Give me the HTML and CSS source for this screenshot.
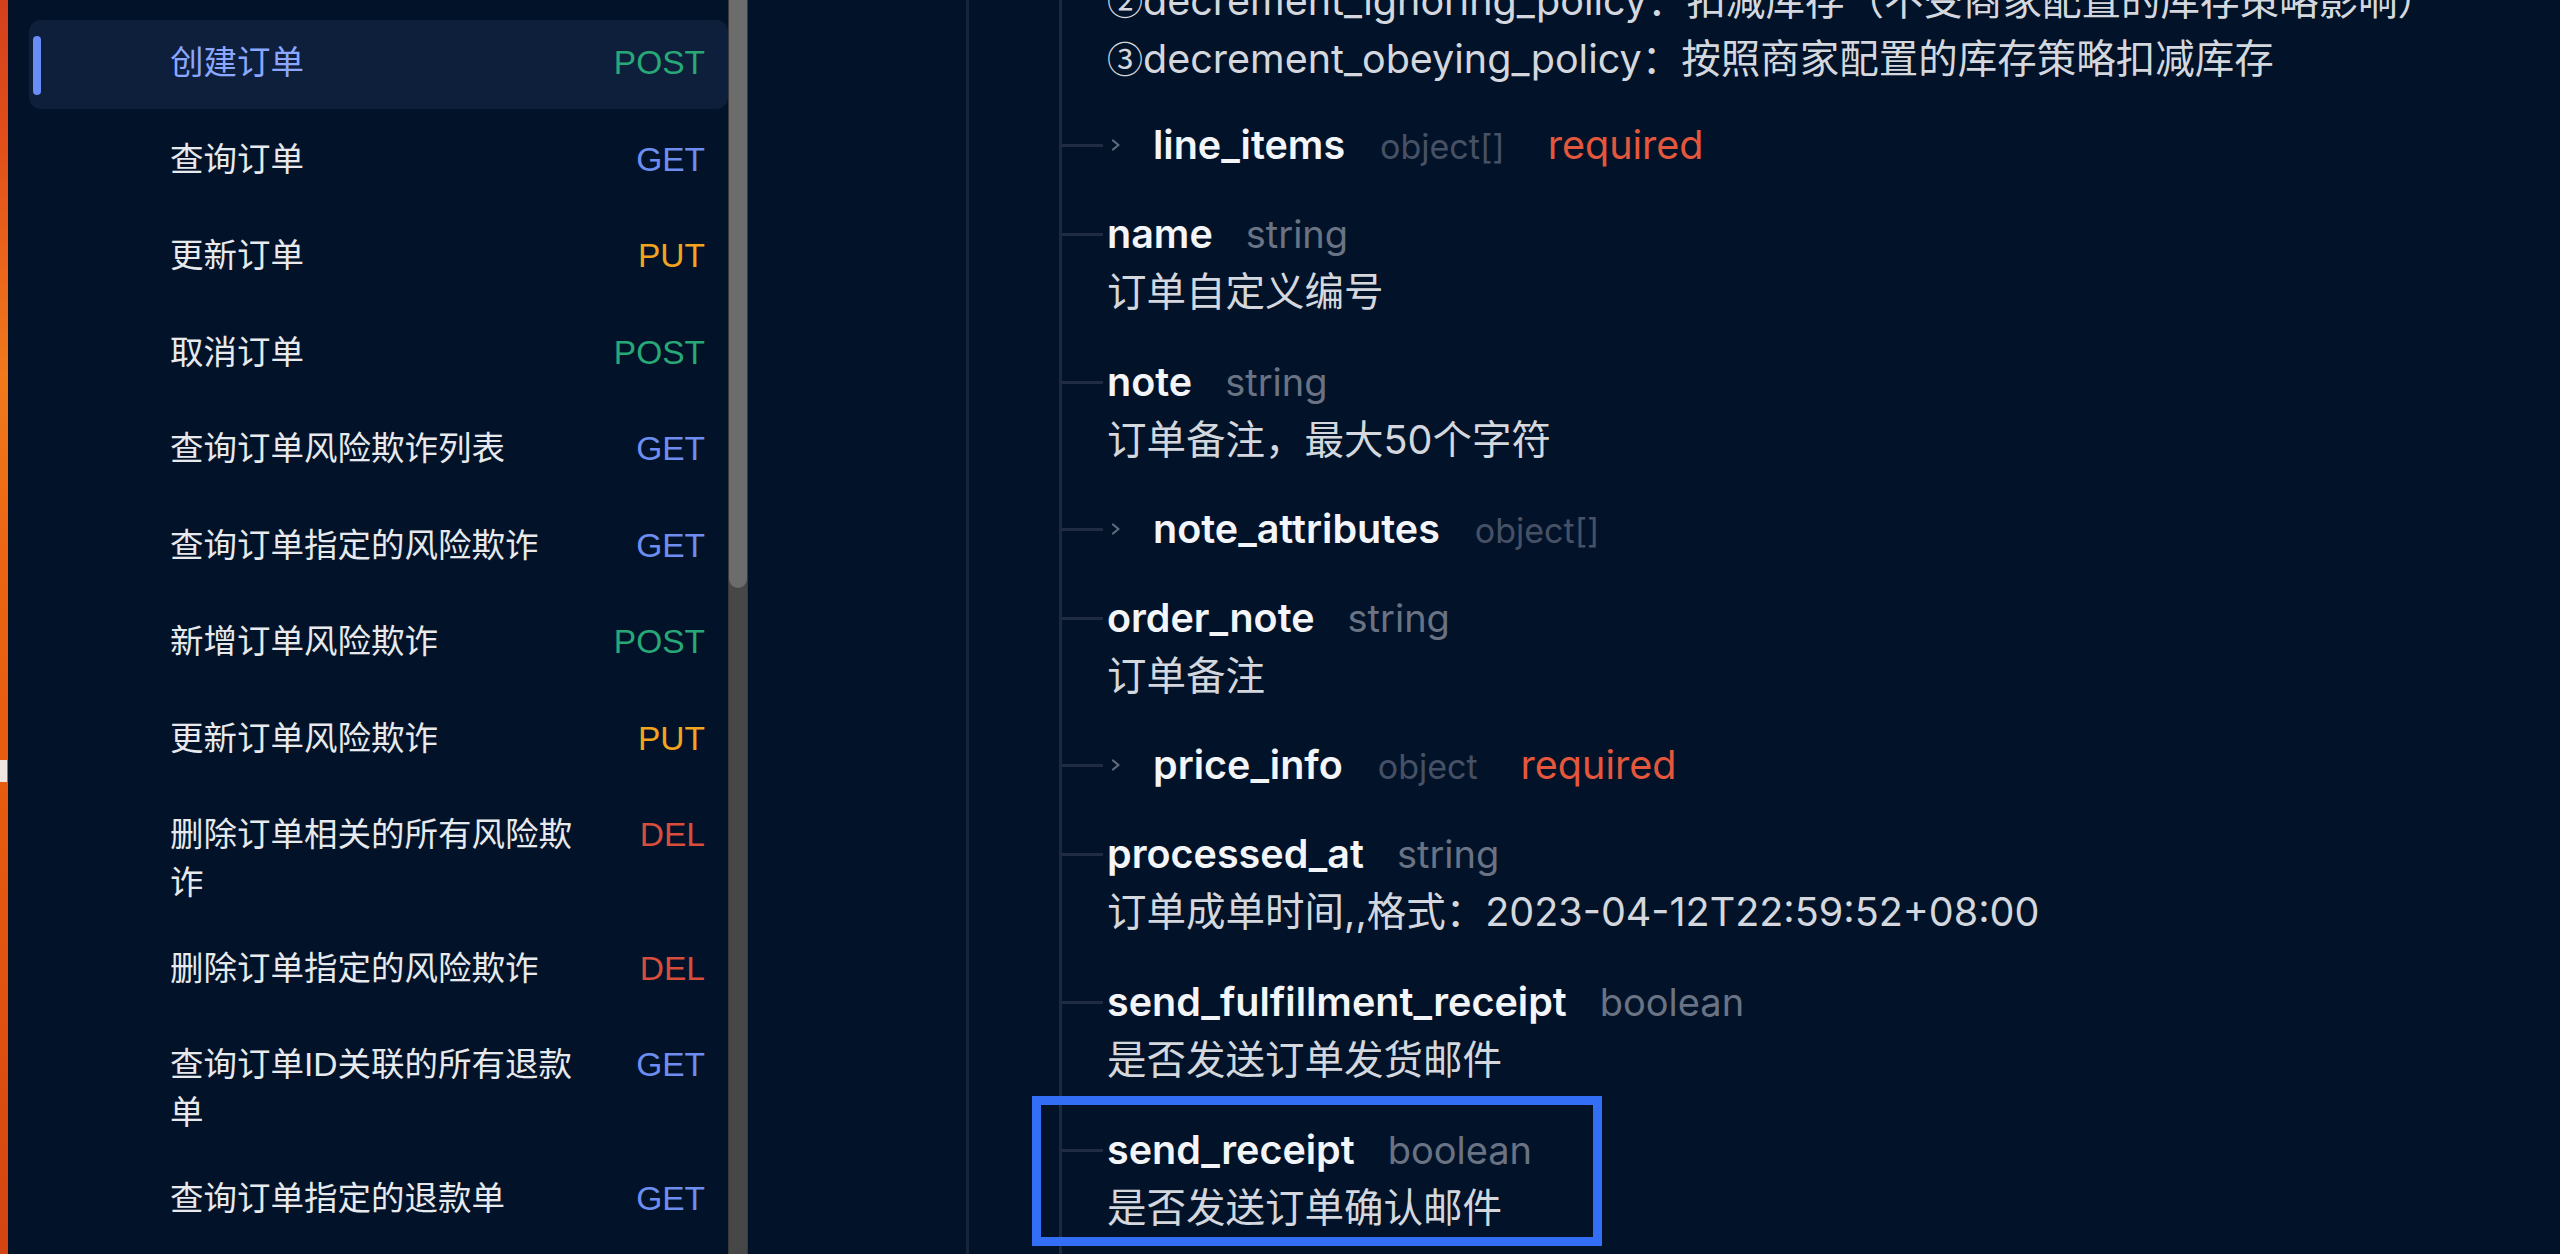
FILE: index.html
```html
<!DOCTYPE html>
<html lang="zh-CN">
<head>
<meta charset="utf-8">
<title>订单 API</title>
<link rel="stylesheet" href="styles.css">
</head>
<body>
<div class="app">
  <div class="edge"><span class="edge-mark"></span></div>
  <aside class="sidebar">
    <ul class="api-list">
      <li class="api-item active"><span class="api-name">创建订单</span><span class="api-method post">POST</span></li>
      <li class="api-item"><span class="api-name">查询订单</span><span class="api-method get">GET</span></li>
      <li class="api-item"><span class="api-name">更新订单</span><span class="api-method put">PUT</span></li>
      <li class="api-item"><span class="api-name">取消订单</span><span class="api-method post">POST</span></li>
      <li class="api-item"><span class="api-name">查询订单风险欺诈列表</span><span class="api-method get">GET</span></li>
      <li class="api-item"><span class="api-name">查询订单指定的风险欺诈</span><span class="api-method get">GET</span></li>
      <li class="api-item"><span class="api-name">新增订单风险欺诈</span><span class="api-method post">POST</span></li>
      <li class="api-item"><span class="api-name">更新订单风险欺诈</span><span class="api-method put">PUT</span></li>
      <li class="api-item"><span class="api-name">删除订单相关的所有风险欺诈</span><span class="api-method del">DEL</span></li>
      <li class="api-item"><span class="api-name">删除订单指定的风险欺诈</span><span class="api-method del">DEL</span></li>
      <li class="api-item"><span class="api-name">查询订单ID关联的所有退款单</span><span class="api-method get">GET</span></li>
      <li class="api-item"><span class="api-name">查询订单指定的退款单</span><span class="api-method get">GET</span></li>
    </ul>
  </aside>
  <div class="scrollbar"><div class="scroll-thumb"></div></div>
  <main class="content">
    <div class="tree">
      <div class="subtree">
        <div class="field tail">
          <p class="desc"><span class="circ">②</span>decrement_ignoring_policy：扣减库存（不受商家配置的库存策略影响）</p>
          <p class="desc"><span class="circ">③</span>decrement_obeying_policy：按照商家配置的库存策略扣减库存</p>
        </div>

        <div class="field collapsible">
          <div class="field-head">
            <span class="conn"></span>
            <span class="chev"><svg width="10" height="12" viewBox="0 0 10 12"><polyline points="2,1.5 7.5,6 2,10.5" fill="none" stroke="#5f6a7c" stroke-width="2.2" stroke-linecap="round" stroke-linejoin="round"/></svg></span>
            <span class="label"><span class="fname">line_items</span><span class="ftype obj">object[]</span><span class="req">required</span></span>
          </div>
        </div>

        <div class="field">
          <div class="field-head"><span class="conn"></span><span class="label"><span class="fname">name</span><span class="ftype">string</span></span></div>
          <p class="desc">订单自定义编号</p>
        </div>

        <div class="field">
          <div class="field-head"><span class="conn"></span><span class="label"><span class="fname">note</span><span class="ftype">string</span></span></div>
          <p class="desc">订单备注，最大50个字符</p>
        </div>

        <div class="field collapsible">
          <div class="field-head">
            <span class="conn"></span>
            <span class="chev"><svg width="10" height="12" viewBox="0 0 10 12"><polyline points="2,1.5 7.5,6 2,10.5" fill="none" stroke="#5f6a7c" stroke-width="2.2" stroke-linecap="round" stroke-linejoin="round"/></svg></span>
            <span class="label"><span class="fname">note_attributes</span><span class="ftype obj">object[]</span></span>
          </div>
        </div>

        <div class="field">
          <div class="field-head"><span class="conn"></span><span class="label"><span class="fname">order_note</span><span class="ftype">string</span></span></div>
          <p class="desc">订单备注</p>
        </div>

        <div class="field collapsible">
          <div class="field-head">
            <span class="conn"></span>
            <span class="chev"><svg width="10" height="12" viewBox="0 0 10 12"><polyline points="2,1.5 7.5,6 2,10.5" fill="none" stroke="#5f6a7c" stroke-width="2.2" stroke-linecap="round" stroke-linejoin="round"/></svg></span>
            <span class="label"><span class="fname">price_info</span><span class="ftype obj">object</span><span class="req">required</span></span>
          </div>
        </div>

        <div class="field">
          <div class="field-head"><span class="conn"></span><span class="label"><span class="fname">processed_at</span><span class="ftype">string</span></span></div>
          <p class="desc">订单成单时间,,格式：2023-04-12T22:59:52+08:00</p>
        </div>

        <div class="field">
          <div class="field-head"><span class="conn"></span><span class="label"><span class="fname">send_fulfillment_receipt</span><span class="ftype">boolean</span></span></div>
          <p class="desc">是否发送订单发货邮件</p>
        </div>

        <div class="field highlight">
          <div class="field-head"><span class="conn"></span><span class="label"><span class="fname">send_receipt</span><span class="ftype">boolean</span></span></div>
          <p class="desc">是否发送订单确认邮件</p>
          <div class="highlight-box"></div>
        </div>
      </div>
    </div>
  </main>
</div>
</body>
</html>
```

FILE: styles.css
```css
html, body {
  margin: 0;
  padding: 0;
  height: 100%;
  background: #021329;
}

body {
  overflow: hidden;
}

.app {
  display: flex;
  height: 1254px;
  overflow: hidden;
  background: #021329;
}

/* orange window edge on the far left */
.edge {
  flex: 0 0 8px;
  box-sizing: border-box;
  padding-top: 760px;
  background: linear-gradient(to bottom, #d4401c 0%, #e2501a 12%, #f07a1c 30%, #ea6412 45%, #e65a10 65%, #de4e10 85%, #d24412 100%);
}

.edge-mark {
  display: block;
  width: 7px;
  height: 22px;
  background: #efe6e2;
}

/* sidebar */
.sidebar {
  flex: 0 0 720px;
  box-sizing: border-box;
  padding-top: 20px;
  font-family: "Liberation Sans", "Noto Sans CJK SC", sans-serif;
  font-size: 33.5px;
}

.api-list {
  list-style: none;
  margin: 0;
  padding: 0 0 0 21px;
  display: flex;
  flex-direction: column;
  gap: 7.5px;
}

.api-item {
  position: relative;
  display: flex;
  align-items: flex-start;
  box-sizing: border-box;
  min-height: 89px;
  padding: 19px 23px 11px 141px;
  line-height: 48px;
  border-radius: 12px;
  color: #e7e9ed;
}

.api-item.active {
  background: #0e1f3c;
  color: #8ba7ff;
}

.api-item.active::before {
  content: "";
  position: absolute;
  left: 4px;
  top: 16px;
  width: 8px;
  height: 59px;
  border-radius: 4px;
  background: #6a8cf6;
}

.api-name {
  width: 420px;
}

.api-method {
  margin-left: auto;
}

.api-method.post { color: #28a877; }
.api-method.get  { color: #6d8ef0; }
.api-method.put  { color: #f3a41f; }
.api-method.del  { color: #d94d3c; }

/* scrollbar */
.scrollbar {
  flex: 0 0 20px;
  box-sizing: border-box;
  background: #474747;
  border-left: 1px solid #3a3a3a;
  border-right: 1px solid #3a3a3a;
}

.scroll-thumb {
  height: 588px;
  background: #6c6c6c;
  border-radius: 0 0 10px 10px;
}

/* content */
.content {
  flex: 1;
  min-width: 0;
  padding-left: 218px;
  font-family: "Inter", "Noto Sans CJK SC", sans-serif;
  font-size: 39.5px;
  color: #d4d8de;
}

.tree {
  margin-top: -28px;
  padding-bottom: 200px;
  border-left: 3px solid #18243a;
}

.subtree {
  margin-left: 90px;
  padding-bottom: 200px;
  border-left: 3px solid #1c283d;
}

.field {
  padding: 16px 0;
}

.field.collapsible {
  padding: 15px 0;
}

.field.tail {
  padding: 0 0 13px;
}

.field.highlight {
  position: relative;
}

.field-head {
  display: flex;
  align-items: center;
  height: 58px;
}

.conn {
  flex: 0 0 41px;
  height: 3px;
  margin-right: 4px;
  background: #1f2b40;
}

.collapsible .conn {
  margin-right: 0;
}

.chev {
  flex: 0 0 50px;
  box-sizing: border-box;
  display: flex;
  align-items: center;
  padding-left: 8px;
}

.label {
  display: flex;
  align-items: baseline;
  white-space: nowrap;
}

.fname {
  font-weight: 600;
  color: #f3f5f8;
}

.ftype {
  margin-left: 33px;
  font-size: 38px;
  color: #6a7384;
}

.ftype.obj {
  margin-left: 35px;
  font-size: 34px;
  color: #475165;
}

.req {
  margin-left: 43px;
  color: #e4573c;
}

.desc {
  margin: 0;
  padding-left: 45px;
  height: 58px;
  line-height: 58px;
  white-space: nowrap;
}

.circ {
  font-family: "Noto Sans CJK SC", sans-serif;
  font-size: 36px;
  line-height: 0;
}

.highlight-box {
  position: absolute;
  left: -30px;
  top: -9px;
  width: 570px;
  height: 150px;
  box-sizing: border-box;
  border: 9px solid #336ff6;
  pointer-events: none;
}
```
